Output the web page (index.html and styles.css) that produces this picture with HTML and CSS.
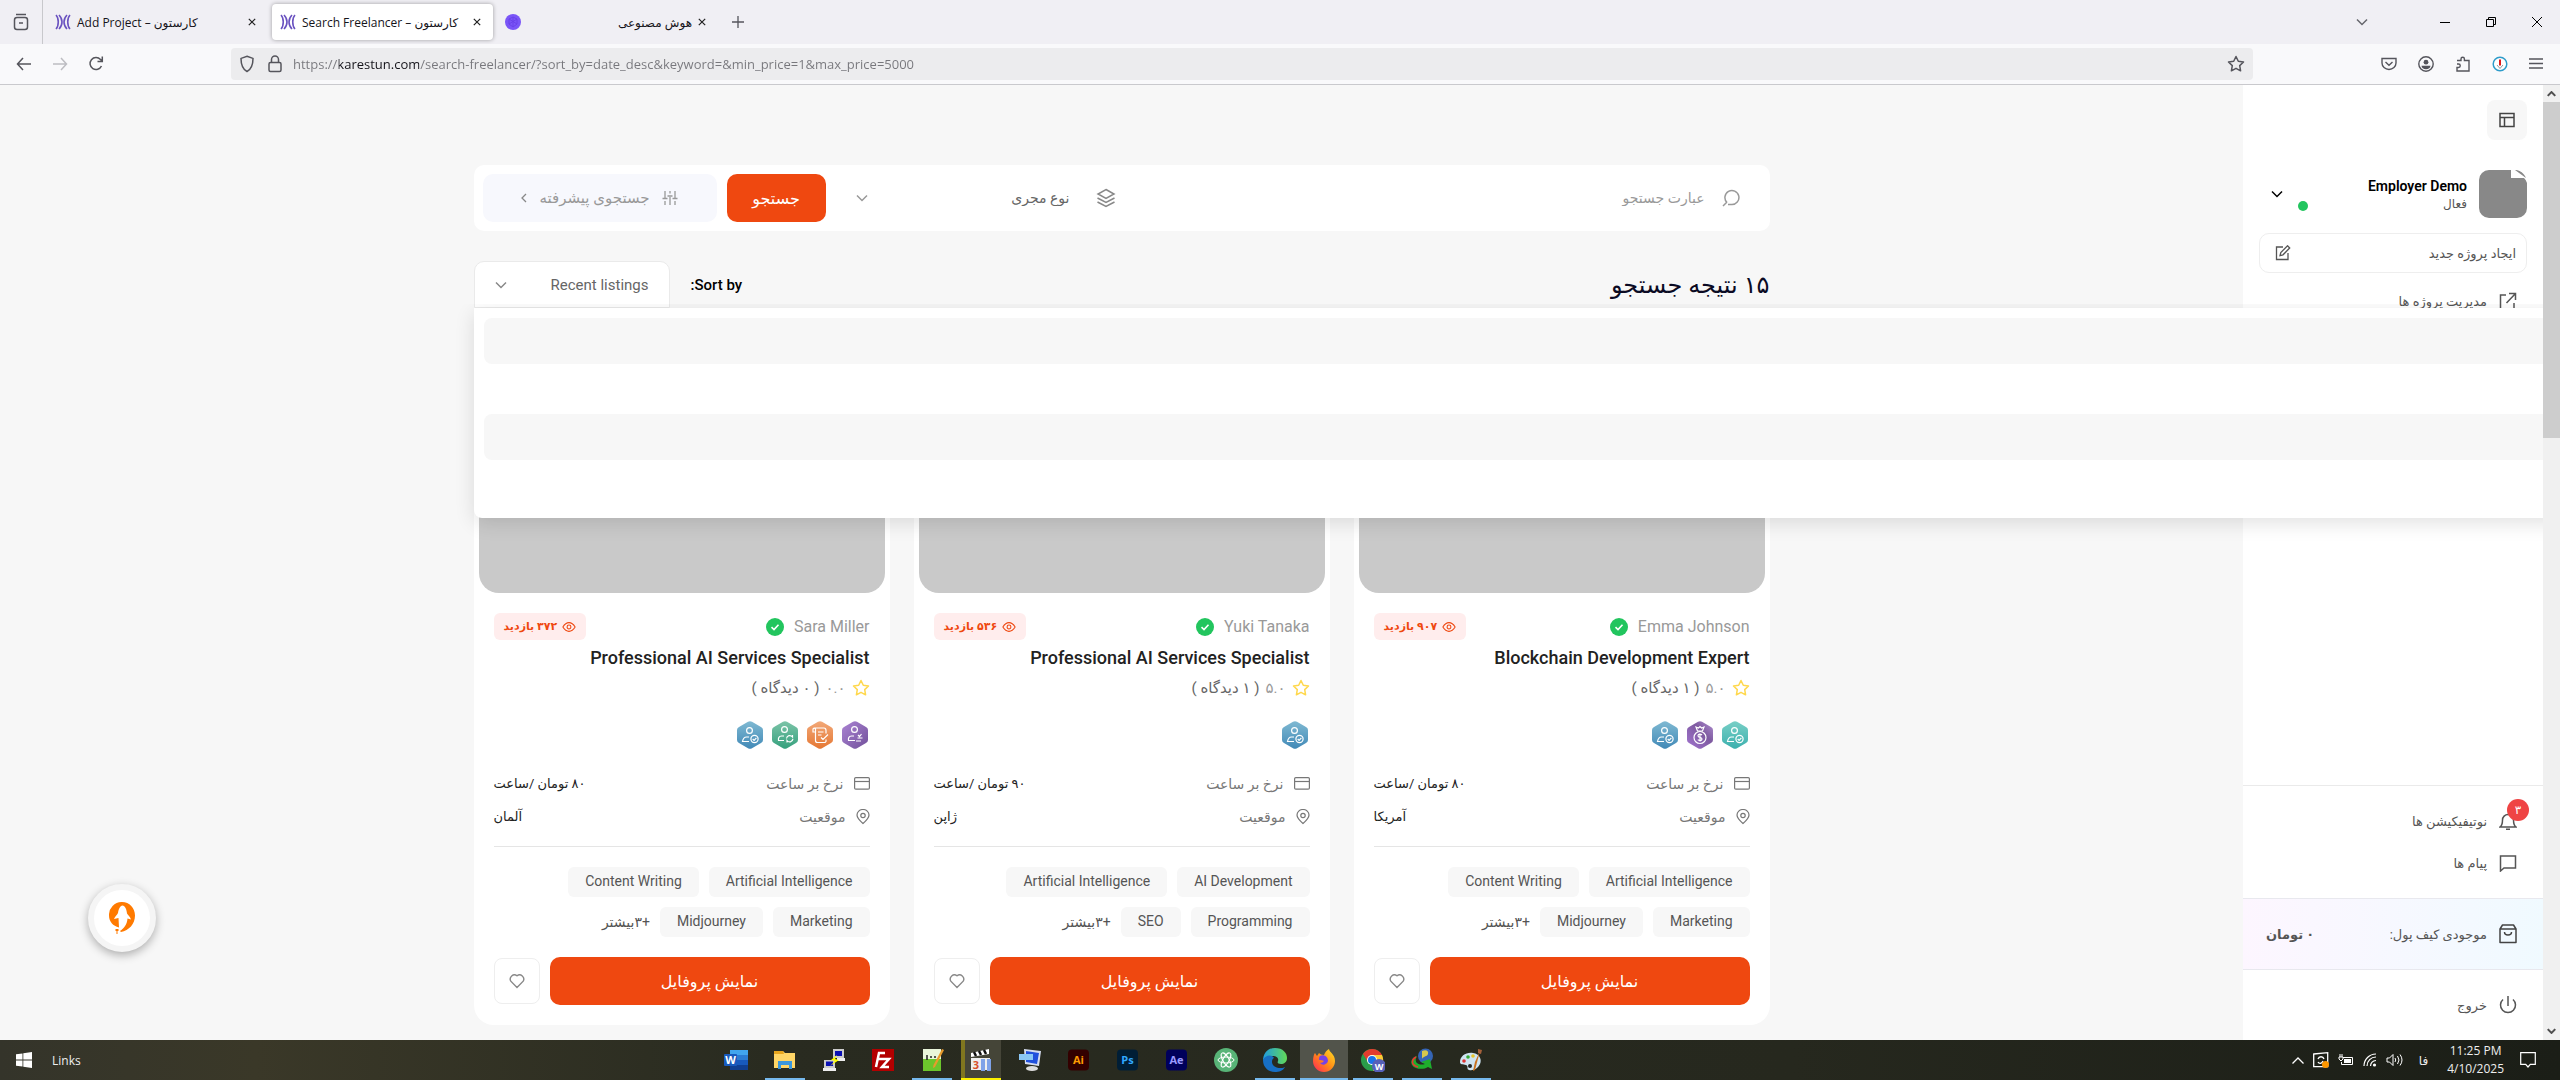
FILE: index.html
```html
<!DOCTYPE html>
<html lang="fa">

<head>
    <meta charset="UTF-8">
    <meta name="viewport" content="width=device-width, initial-scale=1.0">
    <title>Search Freelancer – کارستون</title>
    <link rel="stylesheet" href="styles.css">
</head>

<body>
    <!-- shared icons -->
    <svg class="sprite" aria-hidden="true">
        <defs>
            <linearGradient id="gBlue" x1="0" y1="0" x2="0" y2="1"><stop offset="0" stop-color="#7fb9d2"/><stop offset="1" stop-color="#4189b7"/></linearGradient>
            <linearGradient id="gGreen" x1="0" y1="0" x2="0" y2="1"><stop offset="0" stop-color="#7cc4a8"/><stop offset="1" stop-color="#35a07d"/></linearGradient>
            <linearGradient id="gOrange" x1="0" y1="0" x2="0" y2="1"><stop offset="0" stop-color="#f2a878"/><stop offset="1" stop-color="#e57733"/></linearGradient>
            <linearGradient id="gPurple" x1="0" y1="0" x2="1" y2="1"><stop offset="0" stop-color="#ab84d4"/><stop offset="1" stop-color="#71509a"/></linearGradient>
            <linearGradient id="gViolet" x1="1" y1="0" x2="0" y2="1"><stop offset="0" stop-color="#b08fd0"/><stop offset="0.4" stop-color="#7e5aa0"/><stop offset="1" stop-color="#a274d0"/></linearGradient>
            <linearGradient id="gTeal" x1="0" y1="0" x2="0" y2="1"><stop offset="0" stop-color="#78cfc6"/><stop offset="1" stop-color="#3cb0ae"/></linearGradient>
            <linearGradient id="gEdge" x1="0" y1="0" x2="1" y2="0"><stop offset="0" stop-color="#1f9be0"/><stop offset="1" stop-color="#62d957"/></linearGradient>
            <linearGradient id="gFox" x1="1" y1="0" x2="0" y2="1"><stop offset="0" stop-color="#ffe226"/><stop offset="0.5" stop-color="#ff8a16"/><stop offset="1" stop-color="#ff1f5e"/></linearGradient>
        </defs>
        <symbol id="logo" viewBox="0 0 16 16"><path d="M1 1c3 3 3 11 0 14M4 1c4 4 4 10 0 14M12 1c-4 4-4 10 0 14M15 1c-3 3-3 11 0 14" fill="none" stroke="#6a52c0" stroke-width="1.6"/></symbol>
        <symbol id="close" viewBox="0 0 10 10"><path d="M1 1l8 8M9 1L1 9" fill="none" stroke="#222" stroke-width="1.5"/></symbol>
        <symbol id="down" viewBox="0 0 12 8"><path d="M1 1.5l5 5 5-5" fill="none" stroke="currentColor" stroke-width="1.5"/></symbol>
        <symbol id="check" viewBox="0 0 18 18"><circle cx="9" cy="9" r="9" fill="#22c55e"/><path d="M5.500 9.200l2.500 2.300 4.500-4.800" fill="none" stroke="#fff" stroke-width="1.6"/></symbol>
        <symbol id="eye" viewBox="0 0 16 12"><g fill="none" stroke="currentColor" stroke-width="1.200"><path d="M1 6c2-3.300 4.400-5 7-5s5 1.700 7 5c-2 3.300-4.400 5-7 5S3 9.300 1 6z"/><circle cx="8" cy="6" r="2.200"/></g></symbol>
        <symbol id="star" viewBox="0 0 18 18"><path d="M9 1.500l2.300 4.800 5.200.7-3.800 3.600.9 5.200L9 13.300l-4.600 2.500.9-5.200L1.500 7l5.200-.7z" fill="none" stroke="currentColor" stroke-width="1.5" stroke-linejoin="round"/></symbol>
        <symbol id="card" viewBox="0 0 16 13"><g fill="none" stroke="currentColor" stroke-width="1.200"><rect x=".6" y=".6" width="14.800" height="11.600" rx="1.200"/><path d="M.6 4.500h14.800"/></g></symbol>
        <symbol id="pin" viewBox="0 0 14 16"><g fill="none" stroke="currentColor" stroke-width="1.200"><path d="M7 14.500C3 11 1 8.500 1 6a6 5.500 0 0 1 12 0c0 2.500-2 5-6 8.500z"/><circle cx="7" cy="6.500" r="2.200"/></g></symbol>
        <symbol id="heart" viewBox="0 0 18 16"><path d="M9 14.500L2.800 8.200A4.200 4.200 0 0 1 9 2.800a4.200 4.200 0 0 1 6.200 5.400z" fill="none" stroke="currentColor" stroke-width="1.400"/></symbol>
        <symbol id="b-user" viewBox="0 0 26 28"><g fill="none" stroke="#fff" stroke-width="1.200"><circle cx="12.500" cy="9.500" r="2.900"/><path d="M12 16H9.500C7 16 6 18 5.500 20.500H12"/><circle cx="17.500" cy="18" r="3.600"/><path d="M15.700 18l1.400 1.400 2.300-2.500"/></g></symbol>
        <symbol id="b-sync" viewBox="0 0 26 28"><g fill="none" stroke="#fff" stroke-width="1.200"><circle cx="12.500" cy="8.500" r="2.900"/><path d="M12 15H9.500C7 15 6 17 6.500 19.500H12M14.500 17.500c.5-3 4-4 6-1.500v-2M21 18c-.8 3-4 4-6 1.500v2"/></g></symbol>
        <symbol id="b-scroll" viewBox="0 0 26 28"><g fill="none" stroke="#fff" stroke-width="1.200"><path d="M8 11H6V8.500C6 6.500 8 7 8.500 8v11.500c0 1.500 1 2 2 2h7c2 0 1.500-2 1.500-3M7 7h10c2 0 2 1 2 2.500v3M11 11h5.500M11 14h3.500M14 16.500l2 2 5-5"/></g></symbol>
        <symbol id="b-list" viewBox="0 0 26 28"><g fill="none" stroke="#fff" stroke-width="1.200"><circle cx="12.500" cy="8.500" r="2.900"/><path d="M12 15H9.500C7 15 6 17 6.500 19.500H13M15.500 17h5M14 20h5M16 14l1.500 1.500L19.500 13"/></g></symbol>
        <symbol id="b-money" viewBox="0 0 26 28"><g fill="none" stroke="#fff" stroke-width="1.200"><path d="M10.500 10L9 6l2.500 1L13 5.500 14.500 7 17 6l-1.500 4z"/><circle cx="13" cy="16.500" r="6"/><path d="M15 14c-1.500-1.500-4-1-4 .7 0 2.300 4 1.200 4 3.400 0 1.700-2.800 2-4.200.6M13 12.500v8"/></g></symbol>
        <symbol id="hex" viewBox="0 0 26 28"><path d="M11 .8q2-1.300 4 0l9 5.200q2 1.200 2 3v10q0 1.800-2 3l-9 5.200q-2 1.300-4 0L2 22q-2-1.200-2-3V9q0-1.800 2-3z"/></symbol>
    </svg>

    <div class="tabbar">
        <button class="icon-btn recent" aria-label="Recent tabs"><svg width="16" height="18" viewBox="0 0 16 18"><g fill="none" stroke="#55555c" stroke-width="1.5"><rect x="1.500" y="4.500" width="13" height="12" rx="2.500"/><path d="M3 1.500h10M6 10h4"/></g></svg></button>
        <div class="tab"><svg class="fav"><use href="#logo"/></svg><span>Add Project – کارستون</span><button class="icon-btn" aria-label="Close tab"><svg width="8" height="8"><use href="#close"/></svg></button></div>
        <div class="tab active"><svg class="fav"><use href="#logo"/></svg><span>Search Freelancer – کارستون</span><button class="icon-btn" aria-label="Close tab"><svg width="8" height="8"><use href="#close"/></svg></button></div>
        <div class="tab"><svg class="fav" viewBox="0 0 16 16"><circle cx="8" cy="8" r="8" fill="#7a55f7"/><path d="M4 5l4-2 4 2v5l-4 3-4-3zM4 5l8 5M12 5l-8 5M8 3v10" fill="none" stroke="#6a42ea"/></svg><span class="rtl">هوش مصنوعی</span><button class="icon-btn" aria-label="Close tab"><svg width="8" height="8"><use href="#close"/></svg></button></div>
        <button class="icon-btn plus" aria-label="New tab"><svg width="12" height="12" viewBox="0 0 12 12"><path d="M6 0v12M0 6h12" stroke="#55555c" stroke-width="1.300"/></svg></button>
        <div class="window-btns">
            <button class="icon-btn tab-list" aria-label="List all tabs"><svg width="14" height="8" viewBox="0 0 12 8" color="#66666d"><use href="#down"/></svg></button>
            <button class="icon-btn" aria-label="Minimize"><svg width="10" height="10" viewBox="0 0 10 10"><path d="M0 5.500h10" stroke="#000"/></svg></button>
            <button class="icon-btn" aria-label="Restore"><svg width="10" height="10" viewBox="0 0 10 10"><path d="M.5 2.500h7v7h-7zM2.500 2V.5h7v7H8" fill="none" stroke="#000"/></svg></button>
            <button class="icon-btn" aria-label="Close"><svg width="10" height="10" viewBox="0 0 10 10"><path d="M0 0l10 10M10 0L0 10" stroke="#000"/></svg></button>
        </div>
    </div>

    <div class="navbar">
        <div class="nav-left">
            <button class="icon-btn" aria-label="Back"><svg width="16" height="14" viewBox="0 0 16 14"><path d="M15 7H1.500M7 1L1.500 7 7 13" fill="none" stroke="#55555c" stroke-width="1.500"/></svg></button>
            <button class="icon-btn" aria-label="Forward"><svg width="16" height="14" viewBox="0 0 16 14"><path d="M1 7h13.500M9 1l5.500 6L9 13" fill="none" stroke="#bdbdc2" stroke-width="1.500"/></svg></button>
            <button class="icon-btn" aria-label="Reload"><svg width="16" height="16" viewBox="0 0 16 16"><path d="M13.500 10a6 6 0 1 1-1-6.500L14 5M14.300.5V5.500H9.500" fill="none" stroke="#55555c" stroke-width="1.500"/></svg></button>
        </div>
        <div class="urlbar">
            <svg width="16" height="18" viewBox="0 0 16 18"><path d="M8 1.200l6 2.200C14 10 12.500 14 8 16.500 3.500 14 2 10 2 3.400z" fill="none" stroke="#55555c" stroke-width="1.500"/></svg>
            <svg class="lock" width="14" height="18" viewBox="0 0 14 18"><g fill="none" stroke="#55555c" stroke-width="1.500"><rect x="1" y="7.500" width="12" height="9" rx="1.500"/><path d="M3.500 7.500V4.500a3.500 3.500 0 0 1 7 0v3"/></g></svg>
            <input class="url" type="text" aria-label="Address" value="https://karestun.com/search-freelancer/?sort_by=date_desc&amp;keyword=&amp;min_price=1&amp;max_price=5000">
            <button class="icon-btn" aria-label="Bookmark this page"><svg width="18" height="18" color="#55555c"><use href="#star"/></svg></button>
        </div>
        <div class="nav-right">
            <button class="icon-btn" aria-label="Pocket"><svg width="16" height="14" viewBox="0 0 16 14"><g fill="none" stroke="#55555c" stroke-width="1.400"><path d="M1 1.500h14V6A7 6.500 0 0 1 1 6z"/><path d="M4.500 5L8 8.300 11.500 5"/></g></svg></button>
            <button class="icon-btn" aria-label="Account"><svg width="16" height="16" viewBox="0 0 16 16"><circle cx="8" cy="8" r="7.200" fill="none" stroke="#55555c" stroke-width="1.400"/><circle cx="8" cy="6.200" r="2.400" fill="#55555c"/><path d="M3.500 9.800h9c0 2-2 3.400-4.500 3.400s-4.500-1.400-4.500-3.400z" fill="#55555c"/></svg></button>
            <button class="icon-btn" aria-label="Extensions"><svg width="16" height="16" viewBox="0 0 16 16"><path d="M2 4.500h4V3a1.700 1.700 0 0 1 3.400 0v1.500H14V15H2v-3.500h1.500a1.700 1.700 0 0 0 0-3.500H2" fill="none" stroke="#55555c" stroke-width="1.400"/></svg></button>
            <button class="icon-btn" aria-label="Download helper"><svg width="16" height="16" viewBox="0 0 16 16"><circle cx="8" cy="8" r="6.800" fill="#fff" stroke="#2f9cca" stroke-width="1.500"/><path d="M8 3.500v6" stroke="#e01b1b" stroke-width="2"/><path d="M5 9l3 3.500L11 9" fill="none" stroke="#8a9aa0"/></svg></button>
            <button class="icon-btn" aria-label="Menu"><svg width="14" height="12" viewBox="0 0 14 12"><path d="M0 1h14M0 5.500h14M0 10h14" stroke="#55555c" stroke-width="1.300"/></svg></button>
        </div>
    </div>

    <div class="viewport">
        <div class="site" dir="rtl">
            <aside class="sidebar">
                <div class="side-top">
                    <button class="layout-btn" aria-label="Toggle sidebar"><svg width="16" height="16" viewBox="0 0 16 16"><path d="M1 1.500h14v13H1zM1 5.500h14M5.500 5.500v9" fill="none" stroke="#444" stroke-width="1.500"/></svg></button>
                </div>
                <div class="profile">
                    <svg class="avatar" viewBox="0 0 48 48"><path d="M10 0h22v8h13a10 10 0 0 1 3 5v25a10 10 0 0 1-10 10H10A10 10 0 0 1 0 38V10A10 10 0 0 1 10 0zM37 0c4 .5 8 3 10 8L36 0z" fill="#888"/></svg>
                    <div class="who"><strong dir="ltr">Employer Demo</strong><small>فعال</small></div>
                    <span class="online"></span>
                    <button class="icon-btn" aria-label="Open profile menu"><svg width="12" height="8" color="#000"><use href="#down"/></svg></button>
                </div>
                <a class="new-project" href="#">ایجاد پروژه جدید
                    <svg width="16" height="16" viewBox="0 0 16 16"><g fill="none" stroke="#555" stroke-width="1.300"><path d="M8 2H1.500v12.500H13V8"/><path d="M12.500.8l2.200 2.200L8 9.800l-3 .8.800-3z"/></g></svg>
                </a>
                <a class="side-link" href="#"><svg width="18" height="18" viewBox="0 0 18 18"><path d="M7 3H1.500v14H15v-6M10 1.500h6.500V8M16.500 1.500L7.500 11" fill="none" stroke="#555" stroke-width="1.500"/></svg>مدیریت پروژه ها</a>
                <nav class="side-bottom">
                    <a class="side-link" href="#"><svg width="18" height="18" viewBox="0 0 18 18"><path d="M1 15h16c-2-1.500-2.500-3-2.500-7a5.500 5.500 0 0 0-11 0c0 4-.5 5.500-2.500 7zM7 17.300h4" fill="none" stroke="#555" stroke-width="1.500"/></svg>نوتیفیکیشن ها<span class="count">۳</span></a>
                    <a class="side-link" href="#"><svg width="18" height="18" viewBox="0 0 18 18"><path d="M1.500 2h15v12H5l-3.500 3z" fill="none" stroke="#555" stroke-width="1.500"/></svg>پیام ها</a>
                </nav>
                <div class="wallet"><svg width="18" height="20" viewBox="0 0 18 20"><path d="M1 5l2.500-4h11L17 5v13.500H1zM1 5h16M5.500 8c0 4 7 4 7 0" fill="none" stroke="#444" stroke-width="1.500" stroke-linejoin="round"/></svg>موجودی کیف پول: <b>۰ تومان</b></div>
                <div class="side-exit">
                    <a class="side-link" href="#"><svg width="18" height="18" viewBox="0 0 18 18"><path d="M9 0v10M4 3.500a7.500 7.500 0 1 0 10 0" fill="none" stroke="#555" stroke-width="1.500"/></svg>خروج</a>
                </div>
            </aside>

            <main class="main">
                <div class="container">
                    <form class="search">
                        <label class="keyword"><svg width="18" height="18" viewBox="0 0 18 18"><path d="M5 13.500a7 7 0 1 1 4.500 2H6M5 13l-4 4" fill="none" stroke="#999" stroke-width="1.500"/></svg><input type="text" placeholder="عبارت جستجو" aria-label="عبارت جستجو"></label>
                        <label class="type"><svg width="20" height="20" viewBox="0 0 20 20"><path d="M10 1.500L18 6l-8 4.500L2 6zM1.500 10l8.500 4.500L18.500 10M1.500 14l8.500 4.500L18.500 14" fill="none" stroke="#888" stroke-width="1.500"/></svg><select aria-label="نوع مجری"><option>نوع مجری</option></select><svg width="12" height="8"><use href="#down"/></svg></label>
                        <button class="btn" type="submit">جستجو</button>
                        <button class="advanced" type="button"><svg width="16" height="16" viewBox="0 0 16 16"><path d="M3 1v7M3 11v4M.5 8.500h5M8 1v2.500M8 7v8M5.500 6h5M13 1v7M13 11v4M10.500 8.500h5" fill="none" stroke="#999" stroke-width="1.300"/></svg>جستجوی پیشرفته<svg width="6" height="10" viewBox="0 0 6 10"><path d="M5 1L1 5l4 4" fill="none" stroke="#888" stroke-width="1.300"/></svg></button>
                    </form>

                    <div class="results-head">
                        <h1>۱۵ نتیجه جستجو</h1>
                        <div class="sort">
                            <label for="sort">Sort by:</label>
                            <div class="sort-box">
                                <select id="sort"><option>Recent listings</option></select>
                                <svg width="12" height="8"><use href="#down"/></svg>
                                <ul class="sort-menu"><li class="odd"></li><li></li><li class="odd"></li><li></li></ul>
                            </div>
                        </div>
                    </div>

                    <div class="cards">
                        <article class="card">
                            <div class="cover"></div>
                            <div class="card-body">
                                <div class="card-top"><span class="name">Emma Johnson</span><svg width="18" height="18"><use href="#check"/></svg><span class="views"><svg width="14" height="12"><use href="#eye"/></svg>۹۰۷ بازدید</span></div>
                                <h2>Blockchain Development Expert</h2>
                                <div class="rating"><svg width="18" height="18"><use href="#star"/></svg><span>۵.۰</span><em>( ۱ دیدگاه )</em></div>
                                <div class="badges">
                                    <svg><use href="#hex" fill="url(#gTeal)"/><use href="#b-user"/></svg>
                                    <svg><use href="#hex" fill="url(#gViolet)"/><use href="#b-money"/></svg>
                                    <svg><use href="#hex" fill="url(#gBlue)"/><use href="#b-user"/></svg>
                                </div>
                                <div class="info"><svg width="16" height="13"><use href="#card"/></svg>نرخ بر ساعت<b>۸۰ تومان /ساعت</b></div>
                                <div class="info"><svg width="14" height="16"><use href="#pin"/></svg>موقعیت<b>آمریکا</b></div>
                                <div class="tags"><a href="#">Artificial Intelligence</a><a href="#">Content Writing</a><i></i><a href="#">Marketing</a><a href="#">Midjourney</a><span>+۳بیشتر</span></div>
                                <div class="actions"><button class="btn">نمایش پروفایل</button><button class="fav-btn" aria-label="Save"><svg width="18" height="16"><use href="#heart"/></svg></button></div>
                            </div>
                        </article>

                        <article class="card">
                            <div class="cover"></div>
                            <div class="card-body">
                                <div class="card-top"><span class="name">Yuki Tanaka</span><svg width="18" height="18"><use href="#check"/></svg><span class="views"><svg width="14" height="12"><use href="#eye"/></svg>۵۳۶ بازدید</span></div>
                                <h2>Professional AI Services Specialist</h2>
                                <div class="rating"><svg width="18" height="18"><use href="#star"/></svg><span>۵.۰</span><em>( ۱ دیدگاه )</em></div>
                                <div class="badges">
                                    <svg><use href="#hex" fill="url(#gBlue)"/><use href="#b-user"/></svg>
                                </div>
                                <div class="info"><svg width="16" height="13"><use href="#card"/></svg>نرخ بر ساعت<b>۹۰ تومان /ساعت</b></div>
                                <div class="info"><svg width="14" height="16"><use href="#pin"/></svg>موقعیت<b>ژاپن</b></div>
                                <div class="tags"><a href="#">AI Development</a><a href="#">Artificial Intelligence</a><i></i><a href="#">Programming</a><a href="#">SEO</a><span>+۳بیشتر</span></div>
                                <div class="actions"><button class="btn">نمایش پروفایل</button><button class="fav-btn" aria-label="Save"><svg width="18" height="16"><use href="#heart"/></svg></button></div>
                            </div>
                        </article>

                        <article class="card">
                            <div class="cover"></div>
                            <div class="card-body">
                                <div class="card-top"><span class="name">Sara Miller</span><svg width="18" height="18"><use href="#check"/></svg><span class="views"><svg width="14" height="12"><use href="#eye"/></svg>۳۷۲ بازدید</span></div>
                                <h2>Professional AI Services Specialist</h2>
                                <div class="rating"><svg width="18" height="18"><use href="#star"/></svg><span>۰.۰</span><em>( ۰ دیدگاه )</em></div>
                                <div class="badges">
                                    <svg><use href="#hex" fill="url(#gPurple)"/><use href="#b-list"/></svg>
                                    <svg><use href="#hex" fill="url(#gOrange)"/><use href="#b-scroll"/></svg>
                                    <svg><use href="#hex" fill="url(#gGreen)"/><use href="#b-sync"/></svg>
                                    <svg><use href="#hex" fill="url(#gBlue)"/><use href="#b-user"/></svg>
                                </div>
                                <div class="info"><svg width="16" height="13"><use href="#card"/></svg>نرخ بر ساعت<b>۸۰ تومان /ساعت</b></div>
                                <div class="info"><svg width="14" height="16"><use href="#pin"/></svg>موقعیت<b>آلمان</b></div>
                                <div class="tags"><a href="#">Artificial Intelligence</a><a href="#">Content Writing</a><i></i><a href="#">Marketing</a><a href="#">Midjourney</a><span>+۳بیشتر</span></div>
                                <div class="actions"><button class="btn">نمایش پروفایل</button><button class="fav-btn" aria-label="Save"><svg width="18" height="16"><use href="#heart"/></svg></button></div>
                            </div>
                        </article>
                    </div>
                </div>
            </main>
            <button class="chat" aria-label="Chat"><svg width="26" height="32" viewBox="0 0 26 32"><path d="M10 25.500C4 24 0 19.500 0 13.500A12.800 12.800 0 0 1 13 0c7.500 0 13 6 13 13.500C26 22 20 28.500 12 30l-1-1c4-2.500 7-6.500 7.500-12.500L22 17.500c-1-3-3-4.500-4-6C17.500 7 16 4 13.500 3.500 11 4 9.500 7 9 11c-1 2-3 3.500-4 6l4.500-1zM6.500 27h3v2h-1v3h-1v-3h-1z" fill="#ff7a00"/></svg></button>
        </div>
        <div class="scrollbar">
            <svg width="9" height="6" viewBox="0 0 12 8" color="#505050"><path d="M1 6.500l5-5 5 5" fill="none" stroke="currentColor" stroke-width="2.800"/></svg>
            <span class="thumb"></span>
            <svg width="9" height="6" viewBox="0 0 12 8" color="#505050"><path d="M1 1.500l5 5 5-5" fill="none" stroke="currentColor" stroke-width="2.800"/></svg>
        </div>
    </div>

    <footer class="taskbar">
        <div class="task-left">
            <button class="start" aria-label="Start"><svg width="16" height="16" viewBox="0 0 16 16"><path d="M0 2.300l6.500-.9v6.100H0zM7.300 1.200L16 0v7.500H7.300zM0 8.400h6.500v6.200L0 13.700zM7.300 8.400H16V16l-8.700-1.200z" fill="#fff"/></svg></button>
            <span>Links</span>
        </div>
        <div class="apps">
            <button aria-label="Word"><svg viewBox="0 0 24 24"><path d="M6 2h18v5H6z" fill="#41a5ee"/><path d="M6 7h18v5H6z" fill="#2b7cd3"/><path d="M6 12h18v5H6z" fill="#185abd"/><path d="M6 17h18v5H6z" fill="#103f91"/><rect y="6" width="13" height="12" rx="1" fill="#185abd"/><text x="6.500" y="15.500" class="glyph w">W</text></svg></button>
            <button class="open" aria-label="File Explorer"><svg viewBox="0 0 24 24"><path d="M1 3h9l2 2h10v15H1z" fill="#ffd667"/><path d="M1 3h9l1 3H1z" fill="#e8a61e"/><path d="M5 13h14v8h-3v-4H8v4H5z" fill="#3b97dc"/></svg></button>
            <button aria-label="PuTTY"><svg viewBox="0 0 24 24"><path d="M11 1h11v9H11zM2 12h11v8H2z" fill="#ccc"/><path d="M13 3h7v5h-7zM4 13.500h7V18H4z" fill="#0a10b4"/><path d="M1 20h13v3H1zM15 10h8v3h-8z" fill="#eee"/><path d="M15 7l-6 5 4 1-5 5 9-6-4-1z" fill="#ff0"/></svg></button>
            <button aria-label="FileZilla"><svg viewBox="0 0 24 24"><path d="M1 1h22v22H1z" fill="#b30000"/><path d="M14 5H8L5 19M7 11h6M11 11h7l-7 8h7" fill="none" stroke="#fff" stroke-width="2.500"/></svg></button>
            <button class="open" aria-label="Notepad++"><svg viewBox="0 0 24 24"><path d="M3 1h18v22H3z" fill="#e9f5da"/><path d="M3 11h18v12H3z" fill="#6cc52c"/><path d="M7 7v5M10 9h2M14 9h2" stroke="#222" stroke-width="1.500"/><path d="M22 1l2 1-9 17-2 1 .5-3z" fill="#e89b2c"/></svg></button>
            <button class="alert" aria-label="Media tool"><svg viewBox="0 0 24 24"><path d="M2 5l18-4v5L2 9z" fill="#fff"/><path d="M5 4l2 4M10 3l2 4M15 2l2 4" stroke="#111" stroke-width="2.500"/><path d="M2 10h19v12H2z" fill="#eee"/><text x="7" y="21" class="glyph three">3</text><path d="M12 11h4v12h-4zM18 11h4v12h-4z" fill="#7fa2e8"/></svg></button>
            <button aria-label="Remote Desktop"><svg viewBox="0 0 24 24"><path d="M6 1l17 2-2 15-14-2z" fill="#d5dcee"/><path d="M8 3l13 2-2 11-11-2z" fill="#2050dc"/><path d="M1 6h14v6H1z" fill="#8bc8f5"/><ellipse cx="14" cy="20.500" rx="6" ry="2.500" fill="#ddd"/></svg></button>
            <button aria-label="Illustrator"><svg viewBox="0 0 24 24"><rect x="1" y="1.500" width="21" height="21" rx="4" fill="#330000"/><text x="11.500" y="16" class="glyph ai">Ai</text></svg></button>
            <button aria-label="Photoshop"><svg viewBox="0 0 24 24"><rect x="1" y="1.500" width="21" height="21" rx="4" fill="#001e36"/><text x="11.500" y="16" class="glyph ps">Ps</text></svg></button>
            <button aria-label="After Effects"><svg viewBox="0 0 24 24"><rect x="1" y="1.500" width="21" height="21" rx="4" fill="#00005b"/><text x="11.500" y="16" class="glyph ae">Ae</text></svg></button>
            <button aria-label="Atom"><svg viewBox="0 0 24 24"><circle cx="12" cy="12" r="12" fill="#58b477"/><g fill="none" stroke="#fff"><ellipse cx="12" cy="12" rx="8" ry="3"/><ellipse cx="12" cy="12" rx="8" ry="3" transform="rotate(60 12 12)"/><ellipse cx="12" cy="12" rx="8" ry="3" transform="rotate(120 12 12)"/></g></svg></button>
            <button class="open" aria-label="Edge"><svg viewBox="0 0 24 24"><path d="M0 13C0 5 5 0 12 0c8 0 12 5 12 10 0 4-3 6-6 6s-4-1-3-3c1-3-2-5-5-5-5 0-9 2-10 5z" fill="url(#gEdge)"/><path d="M0 12c2-5 9-6 11-2-3 1-4 10 7 10 2 0 3-.5 4-1-2 4-6 5-10 5C5 24 0 19 0 12z" fill="#176fc4"/></svg></button>
            <button class="current" aria-label="Firefox"><svg viewBox="0 0 24 24"><path d="M1 13c0-4 1-7 2-8l2 3 2-3c1 1 3 2 5 2 1-3 3-5 5-6 0 3 6 5 6 12a11 11 0 0 1-22 0z" fill="url(#gFox)"/><path d="M8 8c3-2 8 0 8 5a4.500 4.500 0 0 1-8 2c2 0 3-1 4-2-2-1-3-1-5-1 0-2 0-3 1-4z" fill="#7542e5"/></svg></button>
            <button class="open" aria-label="Chrome"><svg viewBox="0 0 24 24"><circle cx="11" cy="12" r="11" fill="#2a9d4a"/><path d="M2 6a11 11 0 0 1 19 1H11L7 14z" fill="#e33b2e"/><path d="M11 7h10a11 11 0 0 1-9 16l4-9z" fill="#fcc934"/><circle cx="11" cy="12" r="5" fill="#fff"/><circle cx="11" cy="12" r="4" fill="#1a73e8"/><circle cx="18" cy="18" r="7" fill="#5660b8"/><text x="18" y="21.500" class="glyph cw">W</text></svg></button>
            <button class="open" aria-label="Download Manager"><svg viewBox="0 0 24 24"><circle cx="15.500" cy="8" r="7.500" fill="#3565b5"/><path d="M12 3c4-2 7 0 6 3s-5 2-6 5z" fill="#d7c94c"/><path d="M7 8C0 10-1 17 6 20c4 1.500 9 1 12-1l4 2-2-10-9 3 4 2c-6 2-12-1-8-8z" fill="#1fae2c"/><path d="M6 9c-5 3-5 8 2 10" fill="none" stroke="#e33" stroke-width="1.500"/></svg></button>
            <button class="open" aria-label="Paint"><svg viewBox="0 0 24 24"><path d="M1 14C1 8 7 4 14 5s9 7 7 11-6 7-11 6c-3-1 0-4-3-5s-6 0-6-3z" fill="#cfe4f2"/><circle cx="5" cy="13" r="1.800" fill="#d33"/><circle cx="9" cy="9" r="1.800" fill="#3a3"/><circle cx="14" cy="8" r="1.800" fill="#e8c52a"/><circle cx="11" cy="18" r="2" fill="#222"/><path d="M21 3l-5 19-2 1 2-9z" fill="#c9711f"/><path d="M19 1l4 1-1 4-3-1z" fill="#a6603a"/></svg></button>
        </div>
        <div class="tray">
            <svg width="12" height="7" viewBox="0 0 12 7"><path d="M.5 6.500L6 1l5.500 5.500" fill="none" stroke="#fff" stroke-width="1.300"/></svg>
            <svg width="16" height="16" viewBox="0 0 16 16"><path d="M.7 2l14-1.300v14H.7zM5 7c1-3 5-3 6 0M10 9c-1 3-4 3-5 1" fill="none" stroke="#fff" stroke-width="1.300"/><circle cx="12.500" cy="12.500" r="3.500" fill="#ff9800"/></svg>
            <svg width="16" height="12" viewBox="0 0 16 12"><path d="M5 3.500h9.500v7H3.500V8M1 3h4v2L3 7 1 5zM2 0v3M4 0v3" fill="none" stroke="#fff"/><path d="M6 5h7v4H6z" fill="#fff"/></svg>
            <svg width="14" height="14" viewBox="0 0 14 14"><path d="M1 13A12 12 0 0 1 13 1M4 13a9 9 0 0 1 9-9M7.500 13A6 6 0 0 1 13 7.500" fill="none" stroke="#fff" stroke-width="1.200"/><circle cx="11.500" cy="12" r="1.600" fill="#fff"/></svg>
            <svg width="17" height="14" viewBox="0 0 17 14"><path d="M1 5h2.500L7 1.500v11L3.500 9H1zM9 5q1.500 2 0 4M11.500 3q3 4 0 8M14 1.500q4 5.500 0 11" fill="none" stroke="#fff"/></svg>
            <span class="lang">فا</span>
            <div class="clock"><span>11:25 PM</span><span>4/10/2025</span></div>
            <button aria-label="Notifications"><svg width="16" height="16" viewBox="0 0 16 16"><path d="M.7.7h14.600v11.600h-5L8 15l-2.300-2.700h-5z" fill="none" stroke="#fff" stroke-width="1.200"/></svg></button>
        </div>
    </footer>
</body>

</html>
```
FILE: styles.css
```css
* {
    box-sizing: border-box;
}

body {
    margin: 0;
    height: 100vh;
    display: flex;
    flex-direction: column;
    overflow: hidden;
    font-family: Roboto, "Noto Sans", "DejaVu Sans", sans-serif;
    font-size: 14px;
    color: #222;
}

button,
input,
select {
    font: inherit;
    color: inherit;
    border: none;
    background: none;
    padding: 0;
    margin: 0;
    outline: none;
}

a {
    color: inherit;
    text-decoration: none;
}

svg {
    flex: none;
    display: block;
}

.sprite {
    position: absolute;
    width: 0;
    height: 0;
}

.icon-btn {
    display: flex;
    align-items: center;
    justify-content: center;
}

/* browser tabs */
.tabbar {
    display: flex;
    align-items: center;
    height: 44px;
    background-color: #f0eff4;
    font-family: "Open Sans", "DejaVu Sans", sans-serif;
    font-size: 12px;
}

.recent {
    width: 43px;
    height: 44px;
    border-right: 1px solid #c8c8cc;
}

.tab {
    display: flex;
    align-items: center;
    gap: 6px;
    width: 221px;
    height: 36px;
    margin-left: 4px;
    padding: 0 12px 0 8px;
    border-radius: 4px;
    color: #15141a;
    white-space: nowrap;
}

.tab span {
    flex: 1;
}

.tab.active {
    background-color: white;
    box-shadow: 0 0 4px rgba(0, 0, 0, 0.35);
}

.rtl {
    direction: rtl;
}

.fav {
    width: 16px;
    height: 16px;
}

.plus {
    width: 40px;
}

.window-btns {
    display: flex;
    margin-left: auto;
}

.window-btns .icon-btn {
    width: 46px;
    height: 30px;
}

.window-btns .tab-list {
    margin-right: 37px;
}

/* address bar */
.navbar {
    display: flex;
    align-items: center;
    height: 41px;
    background-color: #f9f9fb;
    border-bottom: 1px solid #c9c9cd;
}

.nav-left {
    display: flex;
    gap: 20px;
    width: 231px;
    padding-left: 16px;
}

.urlbar {
    flex: 1;
    display: flex;
    align-items: center;
    height: 32px;
    padding: 0 8px;
    background-color: #ececee;
    border-radius: 4px;
}

.lock {
    margin: 0 11px 0 13px;
}

.url {
    flex: 1;
    font-family: "Open Sans", sans-serif;
    font-size: 13px;
    color: transparent;
    background: linear-gradient(to right, #77777c 46px, #15141a 46px, #15141a 126px, #77777c 126px);
    -webkit-background-clip: text;
    background-clip: text;
}

.nav-right {
    display: flex;
    gap: 21px;
    width: 307px;
    justify-content: flex-end;
    padding-right: 17px;
}

/* page */
.viewport {
    flex: 1;
    display: flex;
    min-height: 0;
}

.site {
    position: relative;
    flex: 1;
    display: flex;
    min-width: 0;
    overflow: hidden;
    background-color: #f7f7f7;
}

.scrollbar {
    display: flex;
    flex-direction: column;
    align-items: center;
    width: 17px;
    padding: 6px 0;
    background-color: #f0f0f0;
}

.thumb {
    width: 17px;
    height: 336px;
    margin: 5px 0 auto;
    background-color: #cdcdcd;
}

.sidebar {
    display: flex;
    flex-direction: column;
    width: 300px;
    background-color: white;
    color: #555;
    font-size: 13px;
}

.side-top {
    padding: 15px 16px 30px;
}

.layout-btn {
    display: flex;
    align-items: center;
    justify-content: center;
    width: 40px;
    height: 40px;
    border-radius: 8px;
    background-color: #f7f7f7;
}

.profile {
    display: flex;
    align-items: center;
    padding: 0 16px 15px 28px;
}

.avatar {
    width: 48px;
    height: 48px;
}

.who {
    flex: 1;
    display: flex;
    flex-direction: column;
    gap: 3px;
    margin-right: 12px;
}

.who strong {
    color: #000;
    font-size: 14px;
    font-weight: 600;
    text-align: right;
}

.who small {
    font-size: 12px;
}

.online {
    width: 10px;
    height: 10px;
    margin: 24px 0 0 15px;
    border-radius: 50%;
    background-color: #22c55e;
}

.new-project {
    display: flex;
    align-items: center;
    justify-content: space-between;
    height: 40px;
    margin: 0 16px;
    padding: 0 10px 0 15px;
    border: 1px solid #eee;
    border-radius: 10px;
}

.side-link {
    position: relative;
    display: flex;
    align-items: center;
    gap: 12px;
    height: 42px;
    padding: 0 26px;
}

.new-project + .side-link {
    margin-top: 7px;
}

.side-bottom {
    margin-top: auto;
    padding: 14px 0;
    border-top: 1px solid #eaeaea;
}

.count {
    position: absolute;
    right: 14px;
    top: -1px;
    width: 22px;
    height: 22px;
    border-radius: 50%;
    background-color: #ef4444;
    color: white;
    font-size: 12px;
    line-height: 22px;
    text-align: center;
}

.wallet {
    display: flex;
    align-items: center;
    gap: 12px;
    height: 72px;
    padding: 0 26px 0 23px;
    border: solid #e8e8ee;
    border-width: 1px 0;
    background: linear-gradient(to left, #f0faff, #fdf6ff);
}

.wallet b {
    margin-right: auto;
}

.side-exit {
    padding: 14px 0;
}

.main {
    flex: 1;
    min-width: 0;
    padding-top: 80px;
}

.container {
    max-width: 1296px;
    margin: 0 auto;
}

.search {
    display: flex;
    align-items: center;
    height: 66px;
    padding: 0 30px 0 9px;
    border-radius: 10px;
    background-color: white;
    color: #999;
}

.keyword {
    flex: 1;
    display: flex;
    align-items: center;
    gap: 17px;
}

.keyword input {
    flex: 1;
}

.keyword input::placeholder {
    color: #999;
}

.type {
    display: flex;
    align-items: center;
    gap: 26px;
    width: 260px;
    margin-left: 30px;
}

select {
    appearance: none;
    flex: 1;
    color: #666;
}

.btn {
    height: 48px;
    border-radius: 10px;
    background-color: #ef4810;
    color: white;
    font-size: 16px;
}

.search .btn {
    width: 99px;
}

.advanced {
    display: flex;
    align-items: center;
    justify-content: center;
    gap: 12px;
    width: 234px;
    height: 48px;
    margin-right: 10px;
    border-radius: 10px;
    background-color: #f7f8fd;
    font-size: 15px;
}

.results-head {
    display: flex;
    justify-content: space-between;
    align-items: center;
    height: 47px;
    margin-top: 30px;
}

h1 {
    margin: 0;
    color: #0a0a23;
    font-size: 24px;
    line-height: 40px;
    font-weight: 400;
}

.sort {
    display: flex;
    align-items: center;
    gap: 21px;
}

.sort label {
    font-size: 15px;
    font-weight: 500;
    color: #000;
}

.sort-box {
    position: relative;
    display: flex;
    align-items: center;
    width: 196px;
    height: 47px;
    padding: 0 20px;
    border: 1px solid #eaeaea;
    border-radius: 10px 10px 0 0;
    background-color: white;
    color: #888;
    font-size: 15px;
}

.sort-menu {
    position: absolute;
    z-index: 5;
    top: 46px;
    left: -1px;
    width: 100vw;
    margin: 0;
    padding: 10px;
    list-style: none;
    background-color: white;
    border-radius: 0 0 8px 8px;
    box-shadow: 0 5px 20px rgba(0, 0, 0, 0.12);
    clip-path: inset(-4px -30px -30px);
}

.sort-menu li {
    height: 46px;
    margin-bottom: 2px;
    border-radius: 8px;
}

.sort-menu li:last-child {
    margin-bottom: 0;
}

.sort-menu .odd {
    background-color: #f7f7f7;
}

/* freelancer cards */
.cards {
    display: grid;
    grid-template-columns: repeat(3, 1fr);
    gap: 24px;
    margin-top: 24px;
}

.card {
    padding: 5px;
    border-radius: 20px;
    background-color: white;
}

.cover {
    height: 256px;
    border-radius: 20px;
    background-color: #c9c9c9;
}

.card-body {
    padding: 20px 15px 15px;
}

.card-top {
    display: flex;
    align-items: center;
    gap: 10px;
    height: 27px;
}

.name {
    color: #999;
    font-size: 16px;
}

.views {
    display: flex;
    align-items: center;
    gap: 5px;
    height: 27px;
    margin-right: auto;
    padding: 0 10px;
    border-radius: 6px;
    background-color: #ffeded;
    color: #ef4810;
    font-size: 11px;
    font-weight: 700;
}

h2 {
    margin: 5px 0 2px;
    color: #222;
    font-size: 18px;
    line-height: 26px;
    font-weight: 500;
}

.rating {
    display: flex;
    align-items: center;
    gap: 6px;
    height: 30px;
    color: #ffd84d;
    font-size: 15px;
}

.rating span {
    color: #999;
}

.rating em {
    color: #666;
    font-style: normal;
}

.badges {
    display: flex;
    gap: 9px;
    margin: 18px 2px;
}

.badges svg {
    width: 26px;
    height: 28px;
}

.info {
    display: flex;
    align-items: center;
    gap: 10px;
    height: 33px;
    color: #777;
}

.info b {
    margin-right: auto;
    color: #222;
    font-size: 13px;
    font-weight: 400;
}

.tags {
    display: flex;
    flex-wrap: wrap;
    align-items: center;
    gap: 10px;
    row-gap: 5px;
    margin-top: 13px;
    padding: 20px 0;
    border-top: 1px solid #e5e5e5;
    color: #555;
}

.tags a {
    height: 30px;
    padding: 0 17px;
    border-radius: 6px;
    background-color: #f7f7f7;
    line-height: 29px;
}

.tags i {
    width: 100%;
}

.actions {
    display: flex;
    align-items: center;
    gap: 10px;
}

.actions .btn {
    flex: 1;
}

.fav-btn {
    display: flex;
    align-items: center;
    justify-content: center;
    width: 46px;
    height: 46px;
    border: 1px solid #eee;
    border-radius: 8px;
    color: #888;
}

.chat {
    position: absolute;
    left: 88px;
    bottom: 88px;
    display: flex;
    align-items: center;
    justify-content: center;
    width: 68px;
    height: 68px;
    border: 6px solid #f5f5f5;
    border-radius: 50%;
    background-color: white;
    box-shadow: 0 3px 10px rgba(0, 0, 0, 0.3);
}

/* windows taskbar */
.taskbar {
    display: flex;
    align-items: stretch;
    height: 40px;
    background: linear-gradient(to right, #34342a, #3a3828 10%, #292b20 30%, #26281e 70%, #1b1e17);
    color: #eee;
    font-family: "Open Sans", "DejaVu Sans", sans-serif;
    font-size: 12px;
}

.task-left {
    display: flex;
    align-items: center;
    width: 716px;
}

.start {
    display: flex;
    align-items: center;
    justify-content: center;
    width: 48px;
    margin-right: 4px;
}

.apps {
    display: flex;
    gap: 9px;
}

.apps button {
    display: flex;
    align-items: center;
    justify-content: center;
    width: 40px;
    border: solid transparent;
    border-width: 2px 0;
}

.apps svg {
    width: 24px;
    height: 24px;
}

.apps .open {
    border-bottom-color: #76b9ed;
}

.apps .alert {
    background: linear-gradient(to right, #80761f 4px, #454538 4px);
    border-bottom-color: #fff200;
}

.apps .current {
    width: 48px;
    margin: 0 -4px;
    background-color: #52544b;
    border-bottom-color: #76b9ed;
}

.glyph {
    fill: #fff;
    font-weight: 700;
    font-size: 11px;
    text-anchor: middle;
}

.three {
    fill: #d8502a;
}

.ai {
    fill: #ff9a00;
}

.ps {
    fill: #31a8ff;
}

.ae {
    fill: #9999ff;
}

.cw {
    font-size: 9px;
}

.tray {
    display: flex;
    align-items: center;
    gap: 9px;
    margin-left: auto;
    padding-right: 24px;
}

.lang {
    margin: 0 10px 0 7px;
}

.clock {
    display: flex;
    flex-direction: column;
    align-items: center;
    margin-right: 7px;
    line-height: 18px;
}
```
